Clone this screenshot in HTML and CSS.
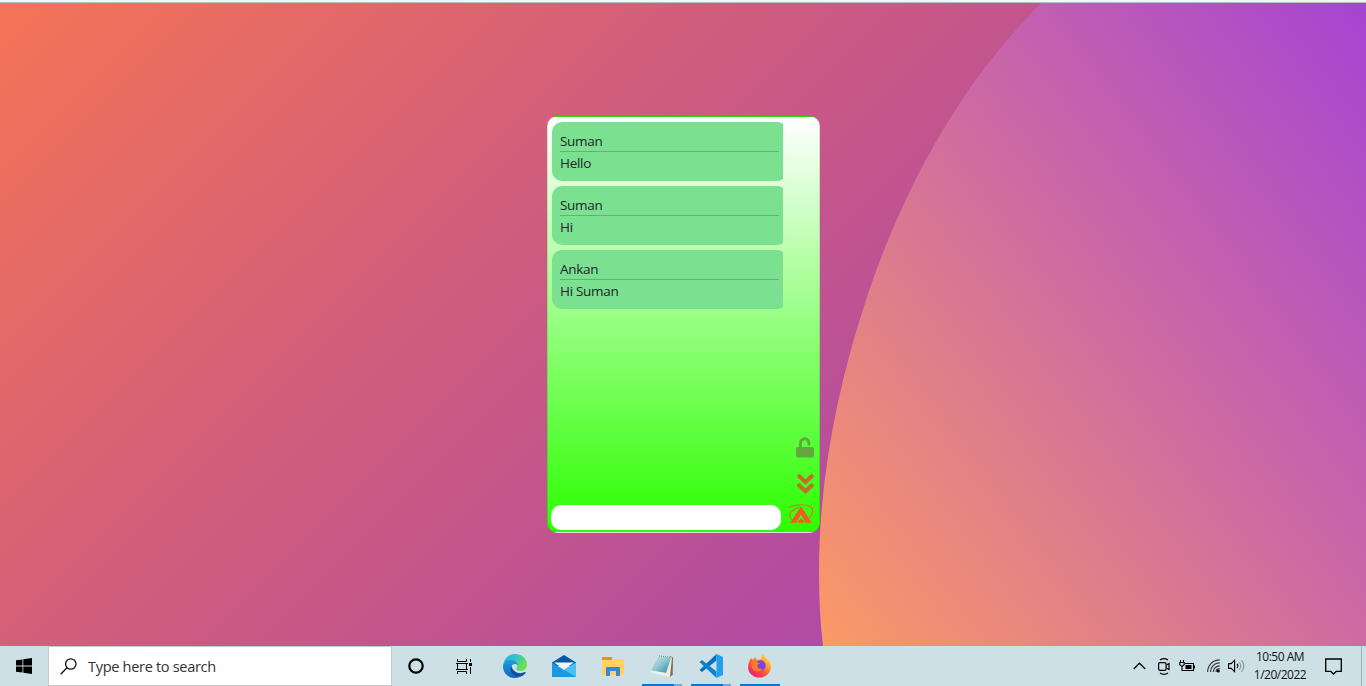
FILE: index.html
```
<!DOCTYPE html>
<html lang="en">
<head>
<meta charset="utf-8">
<title>Chat</title>
<link rel="stylesheet" href="styles.css">
</head>
<body>
<main class="desktop">
  <svg class="wallpaper" viewBox="0 3 1366 643" preserveAspectRatio="none" aria-hidden="true">
    <defs>
      <linearGradient id="base" gradientUnits="userSpaceOnUse" x1="0" y1="3" x2="733" y2="736">
        <stop offset="0" stop-color="#f57456"/><stop offset=".44" stop-color="#d45f78"/><stop offset="1" stop-color="#b04aa5"/>
      </linearGradient>
      <linearGradient id="disc" gradientUnits="userSpaceOnUse" x1="820" y1="646" x2="1478" y2="154">
        <stop offset="0" stop-color="#fa9a66"/><stop offset=".53" stop-color="#ce6ba2"/><stop offset="1" stop-color="#a644d3"/>
      </linearGradient>
    </defs>
    <path fill="url(#base)" d="M0 3H1366V646H0z"/>
    <path fill="url(#disc)" d="M1041 3C1012 33 982 69 960 103C920 163 888 233 866 300C836 391 819 483 819 572C819 597 820 622 823 646H1366V3z"/>
  </svg>
  <section class="card">
    <div class="messages">
      <article class="message"><div class="author">Suman</div><div class="body">Hello</div></article>
      <article class="message"><div class="author">Suman</div><div class="body">Hi</div></article>
      <article class="message"><div class="author">Ankan</div><div class="body">Hi Suman</div></article>
    </div>
    <input class="entry" type="text" aria-label="Message">
    <aside class="tools">
      <svg class="lock" width="18" height="21" viewBox="0 0 18 21"><path d="M4.500 11V6a4.200 4.200 0 0 1 8.400 0v1" fill="none" stroke="#62a63e" stroke-width="2.900" stroke-linecap="round"/><rect y="10" width="18" height="10.500" rx="2" fill="#62a63e"/></svg>
      <svg class="chevrons" width="17" height="20" viewBox="0 0 17 20"><path d="M2.300 2.300L8.500 8l6.200-5.700M2.300 11.500l6.200 5.700 6.200-5.700" fill="none" stroke="#c36c2b" stroke-width="4.200" stroke-linecap="round"/></svg>
      <svg class="send" width="26" height="21" viewBox="0 0 26 21"><path d="M.5 3.500C8 0 18-.2 22.500 2.700c4.500 4 1.500 10-4 13M11 3.200C4 5.500.5 10 2 13.500q1 2 2.500 2" fill="none" stroke="#e0701c" stroke-width="1.100"/><path d="M12.300 3h1.400L22.500 17l1 .8v.9H18L13 10.500l-5 8.200H2v-.9l1.500-.8z" fill="#f55b20"/><path d="M9 18.700v-.9h1.500v-2h1.500l1-1.500 1 1.500h1.500v2H17v.9z" fill="#f55b20"/></svg>
    </aside>
  </section>
</main>
<footer class="taskbar">
  <div class="slot start"><svg width="16" height="16" viewBox="0 0 16 16"><path d="M0 2.300L6.500 1.400V7.600H0zM7.300 1.300L16 0V7.600H7.300zM0 8.400H6.500V14.600L0 13.700zM7.300 8.400H16V16L7.300 14.700z"/></svg></div>
  <div class="search"><svg width="17" height="17" viewBox="0 0 17 17" fill="none" stroke="#111" stroke-width="1.300"><circle cx="10.800" cy="6" r="5.200"/><path d="M7 9.800L.7 16.200"/></svg><span>Type here to search</span></div>
  <div class="slot"><svg width="16" height="16" viewBox="0 0 16 16"><circle cx="8" cy="8" r="6.700" fill="none" stroke="#000" stroke-width="2.200"/></svg></div>
  <div class="slot"><svg width="17" height="15" viewBox="0 0 17 15" fill="none" stroke="#000"><path d="M1.500 0v2.500h9V0M1.500 15v-2.500h9V15M0 4.500h12M0 10.500h12M1.500 4.500v6M10.500 4.500v6M14.500 0v3M14.500 8v7"/><path d="M13 4h3v3h-3z" fill="#000" stroke="none"/></svg></div>
  <div class="apps">
    <div class="app"><svg width="24" height="24" viewBox="0 0 24 24"><defs><linearGradient id="e1" x1="0" x2="1" y1="0" y2=".5"><stop stop-color="#27aee5"/><stop offset=".5" stop-color="#30c5c5"/><stop offset="1" stop-color="#70df4c"/></linearGradient><linearGradient id="e2" x2="0" y2="1"><stop stop-color="#1c9de0"/><stop offset="1" stop-color="#1267ba"/></linearGradient></defs><path d="M.3 10C1.500 4 6.200 0 12 0c7 0 12 4.800 12 10.500 0 4-3 6.500-6.500 6.500-3 0-4.600-1.200-4-2.500 2-2.700.3-6.700-4-7.300C5.500 6.600 2 8 .3 10z" fill="url(#e1)"/><path d="M0 12C.2 8.500 3.500 5.700 7.500 5.700c4 0 7 2.400 7.300 6-1.600-2.400-5-2-6.300.5-2.500 5.500 4 11.500 9.500 10.300C9 27-.3 21 0 12z" fill="url(#e2)"/><path d="M8.500 11.800c-3.500 6 3.500 13 10 10.400 2-.8 3.600-2.500 4.300-4-.2-.4-.7-.3-1-.1-7 3.300-12.700-1.600-13.300-6.300z" fill="#114f9d"/></svg></div>
    <div class="app"><svg width="24" height="22" viewBox="0 0 24 22"><path d="M0 7.500L12 0l12 7.500V11H0z" fill="#0759a8"/><path d="M0 7.500L12 15l12-7.500V22H0z" fill="#1c98e0"/><path d="M24 7.500V22L12 14.700z" fill="#46c3f3"/><path d="M2 7.500h20L12 14.500z" fill="#f5f5f5"/></svg></div>
    <div class="app"><svg width="22" height="19" viewBox="0 0 22 19"><path d="M0 1q0-1 1-1h8l2 2H21q1 0 1 1v14q0 1-1 1H0z" fill="#ffd264"/><path d="M0 3V1q0-1 1-1h8.500l1 1.300L9 3z" fill="#d99a12"/><path d="M4 19v-8q0-1 1-1h12q1 0 1 1v8h-4v-5H8v5z" fill="#3589d4"/></svg></div>
    <div class="app running"><svg width="25" height="24" viewBox="0 0 25 24"><defs><linearGradient id="n" x2="1" y2="1"><stop stop-color="#c9e8ec"/><stop offset=".5" stop-color="#8cc6d0"/><stop offset="1" stop-color="#278aa3"/></linearGradient></defs><path d="M20 2l3 1.500-.3 17.500-3 2z" fill="#7b6a58"/><path d="M10 1.500l12 2L20 23l-3.500-3z" fill="#ecebe2"/><path d="M8.500 2L21 4l-5 15L1 16.500z" fill="url(#n)"/><path d="M1 16.500L16 19l3.500 4L1 18.500z" fill="#e8f2ef"/><path d="M9 1.800L21 3.500" stroke="#687c7d" stroke-dasharray="1 1"/></svg></div>
    <div class="app running"><svg width="24" height="24" viewBox="0 0 24 24"><path d="M17.500 6.500L3 18l-2.500-2 17-16z" fill="#0873ba"/><path d="M17.500 17.500L3 6 .5 8l17 16z" fill="#0b84ce"/><path d="M17.500 0L24 3v18l-6.500 3z" fill="#22a0ee"/></svg></div>
    <div class="app running single"><svg width="24" height="24" viewBox="0 0 24 24"><defs><linearGradient id="f" x1="1" x2=".2" y2="1"><stop stop-color="#fff14b"/><stop offset=".35" stop-color="#ffab2c"/><stop offset=".65" stop-color="#ff5038"/><stop offset="1" stop-color="#e51879"/></linearGradient></defs><path d="M3 4l2 2 2-3 2 3 4-1c1-2 1-4 2-5 1 3 4 4 5 7l1-1c3 5 3 10-1 14-4 4-11 5-16 1S-1 11 3 4z" fill="url(#f)"/><circle cx="12.500" cy="11.500" r="5.200" fill="#7944dd"/><path d="M3.500 8c2-1.500 4-1 6 .5l2.500.8-2.500 1.700c-.5 3 2 4.500 5 3.500-2 3.500-7 4-9.500 1-1.500-2-2-4-1.500-7.500z" fill="#ff7a2d"/></svg></div>
  </div>
  <div class="tray">
    <svg width="13" height="8" viewBox="0 0 13 8"><path d="M.7 7l5.800-5.800L12.300 7" fill="none" stroke="#000" stroke-width="1.300"/></svg>
    <svg width="12" height="17" viewBox="0 0 12 17" fill="none" stroke="#000" stroke-width="1.200"><path d="M2 2q4-2.700 8 0M2 15q4 2.700 8 0"/><rect x=".6" y="4.600" width="7.500" height="7.800" rx="1.500"/><path d="M8.500 7l2.500-1.500v6L8.500 10"/></svg>
    <svg width="17" height="13" viewBox="0 0 17 13" fill="none" stroke="#000" stroke-width="1.100"><path d="M6 3.500h8.500v7H5M15.500 5.500v3M1.500 0v2.500M4.500 0v2.500M.8 2.500h4.400v2.300L3 6.500.8 4.800zM3 6.500v4h3"/><path d="M6.500 5h6v4h-6z" fill="#000" stroke="none"/></svg>
    <svg width="13" height="14" viewBox="0 0 13 14" fill="none" stroke="#333" stroke-width="1.200"><path d="M.6 13C.7 6 6 .9 12.700.9M3.400 13C3.500 8 7.300 3.900 12.700 3.900M6.200 13c.1-3.500 2.800-6.200 6.500-6.200M9 13c.1-2 1.500-3.300 3.700-3.300"/><circle cx="11.300" cy="12" r="1.600" fill="#111" stroke="none"/></svg>
    <svg width="17" height="14" viewBox="0 0 17 14" fill="none" stroke="#000" stroke-width="1.100"><path d="M.6 4.600h2.600L6.600 1.300v11.400L3.200 9.400H.6zM9 4.800q1.600 2.200 0 4.400"/><path d="M11.200 3q3 4 0 8M13.500 1.200q4.500 5.800 0 11.600" stroke="#8b999c"/></svg>
  </div>
  <div class="clock"><span>10:50 AM</span><span>1/20/2022</span></div>
  <div class="notify"><svg width="17" height="17" viewBox="0 0 17 17"><path d="M.7 1h15.600v12.300h-5L8.500 16l-2.800-2.700h-5z" fill="none" stroke="#000" stroke-width="1.300"/></svg></div>
</footer>
</body>
</html>
```
FILE: styles.css
```
* { box-sizing: border-box; }
body {
  margin: 0;
  height: 686px;
  overflow: hidden;
  display: flex;
  flex-direction: column;
  font-family: "Open Sans", "Noto Sans", sans-serif;
  color: #212529;
}
svg { display: block; flex: none; }
.desktop {
  height: 646px;
  position: relative;
  padding-top: 113px;
  border-top: 3px solid #f4f5f9;
}
.desktop::before {
  content: "";
  position: absolute;
  inset: -1px 0 auto;
  height: 1px;
  background: #b9bec3;
}
.wallpaper { position: absolute; inset: 0; width: 100%; height: 643px; }
.card {
  position: relative;
  width: 273px;
  height: 417px;
  margin-left: 547px;
  padding: 5px 4px 2px 3px;
  border: 1px solid rgba(0, 0, 0, .125);
  border-radius: 10px;
  background: linear-gradient(#fff, #2bff00);
  display: grid;
  grid-template: 383px 25px / 232px 1fr;
}
.messages {
  overflow: hidden;
  padding-left: 1px;
  display: flex;
  flex-direction: column;
  gap: 5px;
}
.message {
  width: 235px;
  height: 59px;
  padding: 8px;
  border-radius: 10px;
  background: #7be090;
  font-size: 13.5px;
  letter-spacing: -.3px;
  line-height: 23px;
  flex: none;
}
.author { width: 219px; height: 22px; border-bottom: 1px solid #64b275; }
.entry {
  width: 230px;
  height: 25px;
  border: 0;
  border-radius: 10px;
  background: #fff;
  padding: 0 8px;
}
.tools {
  grid-area: 1 / 2 / 3 / 3;
  display: flex;
  flex-direction: column;
  justify-content: flex-end;
  align-items: flex-end;
  padding: 0 1px 5px 0;
}
.chevrons { margin-top: 16px; }
.send { margin-top: 10px; }
.taskbar {
  height: 40px;
  display: flex;
  background: #cde0e5;
  color: #111;
}
.slot { width: 48px; display: flex; align-items: center; justify-content: center; }
.search {
  width: 344px;
  display: flex;
  align-items: center;
  gap: 11px;
  padding-left: 11px;
  background: #fff;
  border: 1px solid #c5cacc;
  font-size: 14.6px;
  letter-spacing: -.34px;
  color: #333;
}
.apps { display: flex; margin-left: 3px; }
.app {
  width: 49px;
  padding-right: 1px;
  display: flex;
  align-items: center;
  justify-content: center;
}
.running {
  background: linear-gradient(90deg, #0078d7 32px, #62ade5 32px) 4px 100% / 40px 2px no-repeat;
}
.single { background: linear-gradient(#0078d7, #0078d7) 4px 100% / 40px 2px no-repeat; }
.tray { display: flex; align-items: center; margin-left: auto; gap: 9px; }
.tray svg:first-child { margin-right: 3px; }
.tray svg:nth-child(3) { margin-right: 2px; }
.tray svg:last-child { margin-left: -1px; }
.clock {
  width: 72px;
  padding-right: 2px;
  display: flex;
  flex-direction: column;
  justify-content: center;
  align-items: center;
  font-size: 12px;
  line-height: 18px;
  letter-spacing: -.5px;
}
.notify {
  width: 45px;
  padding-left: 8px;
  margin-right: 4px;
  display: flex;
  align-items: center;
  border-right: 1px solid #9daeb4;
}
```
